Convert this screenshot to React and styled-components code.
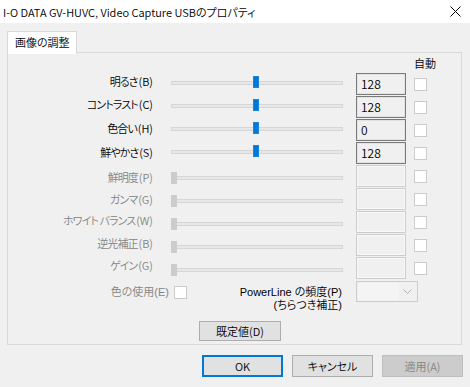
import React from 'react';
import styled, { createGlobalStyle } from 'styled-components';

const Global = createGlobalStyle`
  html, body { margin: 0; padding: 0; background: #f0f0f0; }
  body {
    font-family: "Noto Sans CJK JP", "Noto Sans", sans-serif;
    font-size: 11px;
    font-weight: 350;
    color: #000;
    font-feature-settings: "palt";
  }
  * { box-sizing: border-box; }
`;

const Window = styled.div`
  width: 470px;
  height: 387px;
  background: #f0f0f0;
  display: flex;
  flex-direction: column;
  overflow: hidden;
`;

const TitleBar = styled.div`
  height: 23px;
  background: #fff;
  display: flex;
  align-items: center;
  justify-content: space-between;
  padding: 0 9px 0 3px;
`;

const Title = styled.div`
  font-size: 11px;
  line-height: 16px;
  white-space: nowrap;
`;

const Body = styled.div`
  padding: 8px 0 0 7px;
  display: flex;
  flex-direction: column;
`;

const TabStrip = styled.div`
  display: flex;
  height: 22px;
  margin-bottom: -1px;
  position: relative;
  z-index: 1;
`;

const Tab = styled.div`
  width: 70px;
  height: 23px;
  background: #fff;
  border: 1px solid #d9d9d9;
  border-bottom: none;
  padding-left: 7px;
  line-height: 21px;
  white-space: nowrap;
`;

const Panel = styled.div`
  width: 455px;
  height: 293px;
  border: 1px solid #d9d9d9;
  background: #f0f0f0;
  display: flex;
  flex-direction: column;
`;

const HeaderRow = styled.div`
  height: 20px;
  display: flex;
  align-items: center;
  padding-left: 406px;
  line-height: 16px;
`;

const Row = styled.div`
  height: 23px;
  display: flex;
  align-items: flex-start;
`;

const Label = styled.div`
  width: 145px;
  text-align: right;
  white-space: nowrap;
  line-height: 16px;
  padding-top: ${p => p.$dy}px;
  color: ${p => (p.$disabled ? '#838383' : '#000')};
`;

const Kana = styled.span`
  letter-spacing: -0.9px;
  margin-right: 0.9px;
`;

const Slider = styled.div`
  width: 172px;
  height: 22px;
  margin-left: 18px;
  position: relative;
`;

const Track = styled.div`
  margin-top: ${p => (p.$disabled ? 11 : 8)}px;
  height: 4px;
  border: 1px solid #d6d6d6;
  background: #e7e7e7;
`;

const Thumb = styled.div`
  position: absolute;
  top: ${p => (p.$disabled ? 7 : 3)}px;
  width: 6px;
  height: 12px;
  background: ${p => (p.$disabled ? '#cccccc' : '#0078d7')};
  border: 1px solid ${p => (p.$disabled ? '#cccccc' : '#1a86db')};
`;

const ValueBox = styled.div`
  width: 50px;
  height: 22px;
  margin-left: 13px;
  border: 1px solid ${p => (p.$disabled ? '#cccccc' : '#7a7a7a')};
  box-shadow: inset 0 0 0 1px ${p => (p.$disabled ? '#f9f9f9' : '#e3e3e3')};
  background: #f0f0f0;
  padding-left: 4px;
  line-height: 20px;
  font-size: 12px;
`;

const Check = styled.div`
  width: 13px;
  height: 13px;
  margin-left: ${p => p.$ml ?? 8}px;
  margin-top: ${p => p.$mt ?? 5}px;
  border: 1px solid #cccccc;
  background: #fff;
  flex-shrink: 0;
`;

const BottomRow = styled.div`
  height: 32px;
  margin-top: 1px;
  display: flex;
  align-items: flex-start;
`;

const SideLabel = styled.div`
  width: ${p => p.$w}px;
  text-align: right;
  white-space: nowrap;
  padding-top: ${p => p.$dy}px;
  color: ${p => (p.$disabled ? '#838383' : '#000')};
`;

const LabelLine = styled.div`
  height: 13px;
  line-height: 13px;
  font-family: "Liberation Sans", "Noto Sans CJK JP", sans-serif;
`;

const Combo = styled.div`
  width: 62px;
  height: 21px;
  margin-left: 14px;
  border: 1px solid #cccccc;
  background: #f0f0f0;
  display: flex;
  align-items: center;
  padding: 1px;
`;

const ComboField = styled.div`
  flex: 1;
  height: 100%;
  background: #f4f4f4;
`;

const ComboArrow = styled.div`
  width: 17px;
  display: flex;
  align-items: center;
  justify-content: center;
`;

const DefaultRow = styled.div`
  margin-top: 8px;
  padding-left: 191px;
  display: flex;
`;

const Button = styled.div`
  width: ${p => p.$w || 81}px;
  height: ${p => p.$h || 22}px;
  display: flex;
  align-items: center;
  justify-content: center;
  background: ${p => (p.$disabled ? '#cccccc' : '#e1e1e1')};
  border: 1px solid ${p => (p.$primary ? '#0078d7' : p.$disabled ? '#bfbfbf' : '#adadad')};
  box-shadow: ${p => (p.$primary ? 'inset 0 0 0 1px #0078d7' : 'none')};
  color: ${p => (p.$disabled ? '#838383' : '#000')};
  white-space: nowrap;
`;

const Footer = styled.div`
  margin-top: 10px;
  display: flex;
  justify-content: flex-end;
  gap: 9px;
  padding-right: 7px;
`;

const rows = [
  { text: '明るさ', key: '(B)', value: '128', dy: 0, thumb: 82 },
  { text: 'コントラスト', key: '(C)', value: '128', dy: 0, thumb: 82 },
  { text: '色合い', key: '(H)', value: '0', dy: 1, thumb: 82 },
  { text: '鮮やかさ', key: '(S)', value: '128', dy: 2, thumb: 82 },
  { text: '鮮明度', key: '(P)', disabled: true, dy: 4 },
  { text: 'ガンマ', key: '(G)', disabled: true, dy: 3 },
  { text: 'ホワイト バランス', key: '(W)', disabled: true, dy: 1 },
  { text: '逆光補正', key: '(B)', disabled: true, dy: 1 },
  { text: 'ゲイン', key: '(G)', disabled: true, dy: 0 },
];

export default function App() {
  return (
    <Window>
      <Global />
      <TitleBar>
        <Title>I-O DATA GV-HUVC, Video Capture USBのプロパティ</Title>
        <svg width="11" height="11" viewBox="0 0 11 11">
          <path d="M0.5 0.5 L10.5 10.5 M10.5 0.5 L0.5 10.5" stroke="#000" strokeWidth="1" />
        </svg>
      </TitleBar>
      <Body>
        <TabStrip>
          <Tab>画像の調整</Tab>
        </TabStrip>
        <Panel>
          <HeaderRow>自動</HeaderRow>
          {rows.map((r, i) => (
            <Row key={i}>
              <Label $dy={r.dy} $disabled={r.disabled}>
                <Kana>{r.text}</Kana>{r.key}
              </Label>
              <Slider>
                <Track $disabled={r.disabled} />
                <Thumb $disabled={r.disabled} style={{ left: r.disabled ? 0 : r.thumb }} />
              </Slider>
              <ValueBox $disabled={r.disabled}>{r.value}</ValueBox>
              <Check />
            </Row>
          ))}
          <BottomRow>
            <SideLabel $w={161} $dy={5} $disabled>
              <LabelLine>色の使用(E)</LabelLine>
            </SideLabel>
            <Check $ml={5} $mt={5} />
            <SideLabel $w={155} $dy={5}>
              <LabelLine>PowerLine の頻度(P)</LabelLine>
              <LabelLine>(ちらつき補正)</LabelLine>
            </SideLabel>
            <Combo>
              <ComboField />
              <ComboArrow>
                <svg width="9" height="6" viewBox="0 0 9 6">
                  <path d="M0.5 0.5 L4.5 4.5 L8.5 0.5" fill="none" stroke="#b5b5b5" strokeWidth="1" />
                </svg>
              </ComboArrow>
            </Combo>
          </BottomRow>
          <DefaultRow>
            <Button $w={82} $h={20}>既定値(D)</Button>
          </DefaultRow>
        </Panel>
        <Footer>
          <Button $primary>OK</Button>
          <Button>キャンセル</Button>
          <Button $disabled>適用(A)</Button>
        </Footer>
      </Body>
    </Window>
  );
}
